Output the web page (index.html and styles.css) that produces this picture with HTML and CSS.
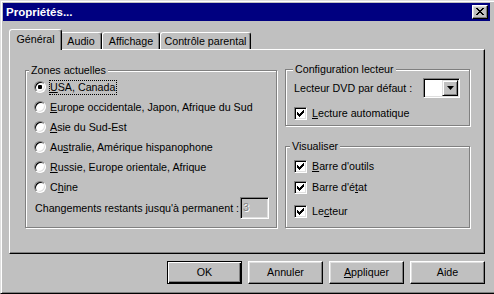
FILE: index.html
```html
<!DOCTYPE html>
<html lang="fr">
<head>
<meta charset="utf-8">
<title>Propriétés</title>
<link rel="stylesheet" href="styles.css">
</head>
<body>
<div class="window">
  <div class="titlebar">
    <span class="title">Propriétés...</span>
    <div class="close-btn">
      <svg width="8" height="7" viewBox="0 0 8 7"><path d="M0 0h2v1h-2z M6 0h2v1h-2z M1 1h2v1h-2z M5 1h2v1h-2z M2 2h4v1h-4z M3 3h2v1h-2z M2 4h4v1h-4z M1 5h2v1h-2z M5 5h2v1h-2z M0 6h2v1h-2z M6 6h2v1h-2z" fill="#000"/></svg>
    </div>
  </div>

  <div class="tabs">
    <div class="tab tab-active tab-general">Général</div>
    <div class="tab tab-audio">Audio</div>
    <div class="tab tab-display">Affichage</div>
    <div class="tab tab-parental">Contrôle parental</div>
  </div>

  <div class="panel">
    <div class="group group-zones">
      <div class="group-label label-zones">Zones actuelles</div>
      <div class="radio-row"><span class="radio"><span class="radio-dot"></span></span><span class="opt focus"><u>U</u>SA, Canada</span></div>
      <div class="radio-row"><span class="radio"></span><span class="opt"><u>E</u>urope occidentale, Japon, Afrique du Sud</span></div>
      <div class="radio-row"><span class="radio"></span><span class="opt"><u>A</u>sie du Sud-Est</span></div>
      <div class="radio-row"><span class="radio"></span><span class="opt">Au<u>s</u>tralie, Amérique hispanophone</span></div>
      <div class="radio-row"><span class="radio"></span><span class="opt"><u>R</u>ussie, Europe orientale, Afrique</span></div>
      <div class="radio-row"><span class="radio"></span><span class="opt">C<u>h</u>ine</span></div>
      <div class="change-row">
        <span>Changements restants jusqu'à permanent :</span>
        <span class="edit-disabled">3</span>
      </div>
    </div>

    <div class="right-col">
      <div class="group group-config">
        <div class="group-label label-config">Configuration lecteur</div>
        <div class="dvd-row">
          <span>Lecteur DVD par défaut :</span>
          <div class="combo">
            <div class="combo-btn">
              <svg width="7" height="4" viewBox="0 0 7 4"><path d="M0 0h7l-3.5 4z" fill="#000"/></svg>
            </div>
          </div>
        </div>
        <div class="check-row row-auto"><span class="check"><svg width="7" height="7" viewBox="0 0 7 7"><path d="M6 0h1v1h-1z M5 1h2v1h-2z M0 2h1v1h-1z M4 2h3v1h-3z M0 3h2v1h-2z M3 3h3v1h-3z M0 4h5v1h-5z M1 5h3v1h-3z M2 6h1v1h-1z" fill="#000"/></svg></span><span class="opt opt-check"><u>L</u>ecture automatique</span></div>
      </div>

      <div class="group group-visual">
        <div class="group-label label-visual">Visualiser</div>
        <div class="check-row row-v1"><span class="check"><svg width="7" height="7" viewBox="0 0 7 7"><path d="M6 0h1v1h-1z M5 1h2v1h-2z M0 2h1v1h-1z M4 2h3v1h-3z M0 3h2v1h-2z M3 3h3v1h-3z M0 4h5v1h-5z M1 5h3v1h-3z M2 6h1v1h-1z" fill="#000"/></svg></span><span class="opt opt-check"><u>B</u>arre d'outils</span></div>
        <div class="check-row row-v2"><span class="check"><svg width="7" height="7" viewBox="0 0 7 7"><path d="M6 0h1v1h-1z M5 1h2v1h-2z M0 2h1v1h-1z M4 2h3v1h-3z M0 3h2v1h-2z M3 3h3v1h-3z M0 4h5v1h-5z M1 5h3v1h-3z M2 6h1v1h-1z" fill="#000"/></svg></span><span class="opt opt-check">Barre d'é<u>t</u>at</span></div>
        <div class="check-row row-v3"><span class="check"><svg width="7" height="7" viewBox="0 0 7 7"><path d="M6 0h1v1h-1z M5 1h2v1h-2z M0 2h1v1h-1z M4 2h3v1h-3z M0 3h2v1h-2z M3 3h3v1h-3z M0 4h5v1h-5z M1 5h3v1h-3z M2 6h1v1h-1z" fill="#000"/></svg></span><span class="opt opt-check">Le<u>c</u>teur</span></div>
      </div>
    </div>
  </div>

  <div class="buttons">
    <button class="btn btn-default">OK</button>
    <button class="btn">Annuler</button>
    <button class="btn"><u>A</u>ppliquer</button>
    <button class="btn">Aide</button>
  </div>
</div>
</body>
</html>
```

FILE: styles.css
```css
* { box-sizing: border-box; }

html, body {
  margin: 0;
  padding: 0;
  background: #c0c0c0;
}

body {
  width: 494px;
  height: 294px;
  overflow: hidden;
  font-family: "Liberation Sans", Arial, sans-serif;
  font-size: 10.7px;
  line-height: 13px;
  color: #000;
}

u { text-decoration: underline; text-underline-offset: 1px; }

.window {
  width: 494px;
  height: 294px;
  background: #c0c0c0;
  border-style: solid;
  border-width: 1px 0 1px 1px;
  border-color: #dfdfdf #000 #000 #dfdfdf;
  box-shadow: inset 1px 1px #fff, inset 0 -1px #808080;
  padding: 2px 4px 2px 2px;
}

/* Title bar */
.titlebar {
  height: 18px;
  background: #000080;
  display: flex;
  align-items: center;
  padding: 0 2px 0 2px;
}

.title {
  color: #fff;
  font-weight: bold;
  font-size: 11.5px;
  line-height: 18px;
  padding-left: 1px;
}

.close-btn {
  margin-left: auto;
  width: 16px;
  height: 14px;
  background: #c0c0c0;
  border: 1px solid;
  border-color: #fff #000 #000 #fff;
  box-shadow: inset -1px -1px #808080, inset 1px 1px #dfdfdf;
  display: flex;
  align-items: center;
  justify-content: center;
  padding-bottom: 1px;
}
.close-btn svg { display: block; }

/* Tabs */
.tabs {
  display: flex;
  align-items: flex-end;
  height: 20px;
  margin: 8px 0 0 6px;
  padding-left: 2px;
}

.tab {
  height: 17px;
  border-style: solid;
  border-width: 1px 1px 0 1px;
  border-color: #fff #000 transparent #fff;
  border-radius: 3px 3px 0 0;
  box-shadow: inset -1px 0 #808080;
  text-align: center;
  padding-top: 2px;
  white-space: nowrap;
  background: #c0c0c0;
}

.tab-general { width: 49px; }
.tab-audio { width: 42px; }
.tab-display { width: 58px; }
.tab-parental { width: 91px; }

.tab-active {
  position: relative;
  z-index: 1;
  height: 21px;
  width: 53px;
  margin: 0 -2px -1px -2px;
  padding-top: 3px;
}

/* Panel */
.panel {
  width: 476px;
  height: 205px;
  margin-left: 6px;
  border: 1px solid;
  border-color: #fff #000 #000 #fff;
  box-shadow: inset -1px -1px #808080;
  padding: 19px 0 0 15px;
  display: flex;
  align-items: flex-start;
  gap: 8px;
}

.group {
  border: 1px solid #808080;
  box-shadow: inset 1px 1px #fff, 1px 1px #fff;
  display: flex;
  flex-direction: column;
}

.group-label {
  align-self: flex-start;
  margin-top: -7px;
  height: 13px;
  padding: 0 2px;
  background: #c0c0c0;
  white-space: nowrap;
}
.label-zones { margin-left: 3px; }
.label-config { margin-left: 7px; }
.label-visual { margin-left: 4px; }

.group-zones {
  width: 252px;
  height: 158px;
  margin-top: 1px;
}

.radio-row {
  display: flex;
  align-items: center;
  height: 20px;
  margin-left: 8px;
  white-space: nowrap;
}

.radio {
  width: 12px;
  height: 12px;
  flex: none;
  border-radius: 50%;
  background: #fff;
  border: 1px solid;
  border-color: #808080 #fff #fff #808080;
  box-shadow: inset 1px 1px #000, inset -1px -1px #dfdfdf;
  display: flex;
  align-items: center;
  justify-content: center;
}

.radio-dot {
  width: 4px;
  height: 4px;
  border-radius: 1px;
  background: #000;
}

.opt {
  margin-left: 3px;
  border: 1px dotted transparent;
  padding: 0 1px 0 0;
  line-height: 13px;
}
.opt.focus { border-color: #000; }
.opt-check { margin-left: 4px; }

.change-row {
  display: flex;
  align-items: center;
  justify-content: space-between;
  height: 22px;
  margin: 0 7px 0 9px;
  white-space: nowrap;
}

.edit-disabled {
  width: 29px;
  height: 22px;
  border: 1px solid;
  border-color: #808080 #fff #fff #808080;
  box-shadow: inset 1px 1px #000, inset -1px -1px #dfdfdf;
  background: #c0c0c0;
  color: #808080;
  text-shadow: 1px 1px #fff;
  padding-left: 2px;
  line-height: 19px;
}

/* Right column */
.right-col {
  width: 185px;
  display: flex;
  flex-direction: column;
}

.group-config { height: 57px; }

.dvd-row {
  display: flex;
  align-items: center;
  justify-content: space-between;
  height: 20px;
  margin: 2px 9px 0 8px;
  white-space: nowrap;
}

.combo {
  width: 37px;
  height: 20px;
  background: #fff;
  border: 1px solid;
  border-color: #808080 #fff #fff #808080;
  box-shadow: inset 1px 1px #000, inset -1px -1px #dfdfdf;
  padding: 1px;
  display: flex;
  justify-content: flex-end;
}

.combo-btn {
  width: 16px;
  height: 16px;
  background: #c0c0c0;
  border: 1px solid;
  border-color: #dfdfdf #000 #000 #dfdfdf;
  box-shadow: inset 1px 1px #fff, inset -1px -1px #808080;
  display: flex;
  align-items: center;
  justify-content: center;
}
.combo-btn svg { display: block; }

.check-row {
  display: flex;
  align-items: center;
  height: 20px;
  margin-left: 8px;
  white-space: nowrap;
}
.row-auto { margin-top: 5px; }

.check {
  width: 13px;
  height: 13px;
  flex: none;
  background: #fff;
  border: 1px solid;
  border-color: #808080 #fff #fff #808080;
  box-shadow: inset 1px 1px #000, inset -1px -1px #dfdfdf;
  display: flex;
  align-items: center;
  justify-content: center;
}
.check svg { display: block; }

.group-visual {
  height: 82px;
  margin-top: 20px;
}
.row-v1 { margin-top: 3px; }
.row-v2 { margin-top: 1px; }
.row-v3 { margin-top: 4px; }

/* Buttons */
.buttons {
  width: 476px;
  margin: 7px 0 0 6px;
  display: flex;
  justify-content: flex-end;
  gap: 6px;
}

.btn {
  width: 75px;
  height: 23px;
  padding: 0;
  font-family: inherit;
  font-size: 10.7px;
  line-height: 21px;
  color: #000;
  background: #c0c0c0;
  border: 1px solid;
  border-color: #fff #000 #000 #fff;
  box-shadow: inset -1px -1px #808080, inset 1px 1px #dfdfdf;
  text-align: center;
}

.btn-default {
  border-color: #000;
  box-shadow: inset 1px 1px #fff, inset -1px -1px #000, inset -2px -2px #808080;
}
```
